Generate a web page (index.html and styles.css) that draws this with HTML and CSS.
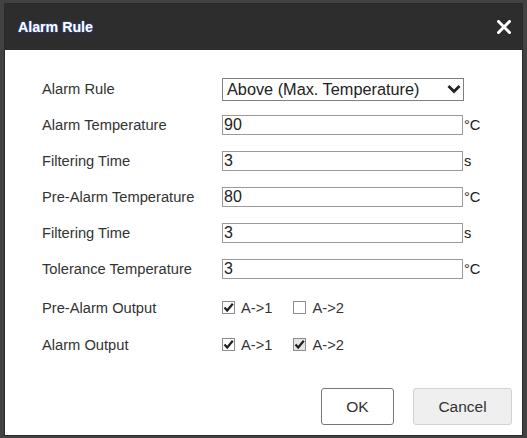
FILE: index.html
```html
<!DOCTYPE html>
<html>
<head>
<meta charset="utf-8">
<link rel="stylesheet" href="styles.css">
</head>
<body>
<div class="dialog">
  <div class="header">
    <span class="title">Alarm Rule</span>
    <svg class="close" width="14" height="14" viewBox="0 0 14 14"><path d="M1.5 1.5 L12.5 12.5 M12.5 1.5 L1.5 12.5" stroke="#fff" stroke-width="3" stroke-linecap="square"/></svg>
  </div>
  <div class="content">
    <div class="form">
      <div class="row">
        <div class="label">Alarm Rule</div>
        <div class="field">
          <div class="select"><span>Above (Max. Temperature)</span>
            <svg class="chev" width="14" height="10" viewBox="0 0 14 10"><path d="M1.5 2 L7 7.5 L12.5 2" fill="none" stroke="#222" stroke-width="2.8"/></svg>
          </div>
        </div>
      </div>
      <div class="row">
        <div class="label">Alarm Temperature</div>
        <div class="field"><div class="input">90</div><span class="unit">°C</span></div>
      </div>
      <div class="row">
        <div class="label">Filtering Time</div>
        <div class="field"><div class="input">3</div><span class="unit">s</span></div>
      </div>
      <div class="row">
        <div class="label">Pre-Alarm Temperature</div>
        <div class="field"><div class="input">80</div><span class="unit">°C</span></div>
      </div>
      <div class="row">
        <div class="label">Filtering Time</div>
        <div class="field"><div class="input">3</div><span class="unit">s</span></div>
      </div>
      <div class="row">
        <div class="label">Tolerance Temperature</div>
        <div class="field"><div class="input">3</div><span class="unit">°C</span></div>
      </div>
      <div class="row check-row first-check">
        <div class="label">Pre-Alarm Output</div>
        <div class="field">
          <label class="opt"><span class="box"><svg width="11" height="11" viewBox="0 0 11 11"><path d="M1.5 5.5 L4.2 8.5 L9.8 1.8" fill="none" stroke="#222" stroke-width="2.2"/></svg></span>A-&gt;1</label>
          <label class="opt"><span class="box"></span>A-&gt;2</label>
        </div>
      </div>
      <div class="row check-row">
        <div class="label">Alarm Output</div>
        <div class="field">
          <label class="opt"><span class="box"><svg width="11" height="11" viewBox="0 0 11 11"><path d="M1.5 5.5 L4.2 8.5 L9.8 1.8" fill="none" stroke="#222" stroke-width="2.2"/></svg></span>A-&gt;1</label>
          <label class="opt"><span class="box shaded"><svg width="11" height="11" viewBox="0 0 11 11"><path d="M1.5 5.5 L4.2 8.5 L9.8 1.8" fill="none" stroke="#222" stroke-width="2.2"/></svg></span>A-&gt;2</label>
        </div>
      </div>
    </div>
    <div class="footer">
      <button class="btn ok">OK</button>
      <button class="btn cancel">Cancel</button>
    </div>
  </div>
</div>
</body>
</html>
```
FILE: styles.css
```css
html, body {
  margin: 0;
  padding: 0;
}
body {
  background: #424242;
  width: 527px;
  height: 438px;
  overflow: hidden;
  font-family: "Liberation Sans", Arial, sans-serif;
  color: #333;
}
.dialog {
  margin: 4px 5px 0 5px;
  width: 517px;
  height: 431px;
  display: flex;
  flex-direction: column;
  box-shadow: 0 0 0 1px #2a2a2a;
}
.header {
  height: 46px;
  background: #2d2d2d;
  display: flex;
  align-items: center;
  justify-content: space-between;
  padding: 0 11px 0 13px;
  box-sizing: border-box;
}
.title {
  color: #fff;
  font-weight: bold;
  font-size: 14.2px;
  text-shadow: 0 0 2px #3b63c9, 0 0 1px #2f55b8;
}
.close {
  display: block;
}
.content {
  flex: 1;
  background: #fff;
  display: flex;
  flex-direction: column;
}
.form {
  padding: 21px 0 0 37px;
}
.row {
  height: 36px;
  display: flex;
  align-items: center;
}
.check-row {
  height: 37px;
}
.first-check {
  margin-top: 2px;
}
.label {
  width: 180px;
  font-size: 14.7px;
  color: #333;
}
.field {
  display: flex;
  align-items: center;
}
.select {
  width: 242px;
  height: 23px;
  box-sizing: border-box;
  border: 1px solid #7f7f7f;
  display: flex;
  align-items: center;
  justify-content: space-between;
  padding: 0 2px 0 4px;
  font-size: 16.3px;
  color: #222;
}
.chev {
  display: block;
}
.input {
  width: 241px;
  height: 20px;
  box-sizing: border-box;
  border: 1px solid #9a9a9a;
  font-size: 16px;
  line-height: 18px;
  padding-left: 1px;
  color: #222;
}
.unit {
  font-size: 14.7px;
  margin-left: 1px;
  color: #222;
}
.opt {
  display: flex;
  align-items: center;
  font-size: 14.7px;
  color: #333;
  margin-right: 21px;
}
.box {
  width: 13px;
  height: 13px;
  box-sizing: border-box;
  border: 1px solid #8c8c8c;
  background: #fff;
  display: flex;
  align-items: center;
  justify-content: center;
  margin-right: 6px;
}
.box.shaded {
  background: #e6e6e6;
}
.box svg {
  display: block;
}
.footer {
  margin-top: auto;
  display: flex;
  justify-content: flex-end;
  gap: 19px;
  padding: 0 10px 10px 0;
}
.btn {
  height: 37px;
  font-family: "Liberation Sans", Arial, sans-serif;
  font-size: 15.5px;
  color: #333;
  border-radius: 3px;
  box-sizing: border-box;
  padding: 0;
}
.ok {
  width: 73px;
  background: #fff;
  border: 1px solid #767676;
}
.cancel {
  width: 99px;
  background: #efefef;
  border: 1px solid #d2d2d2;
}
```
